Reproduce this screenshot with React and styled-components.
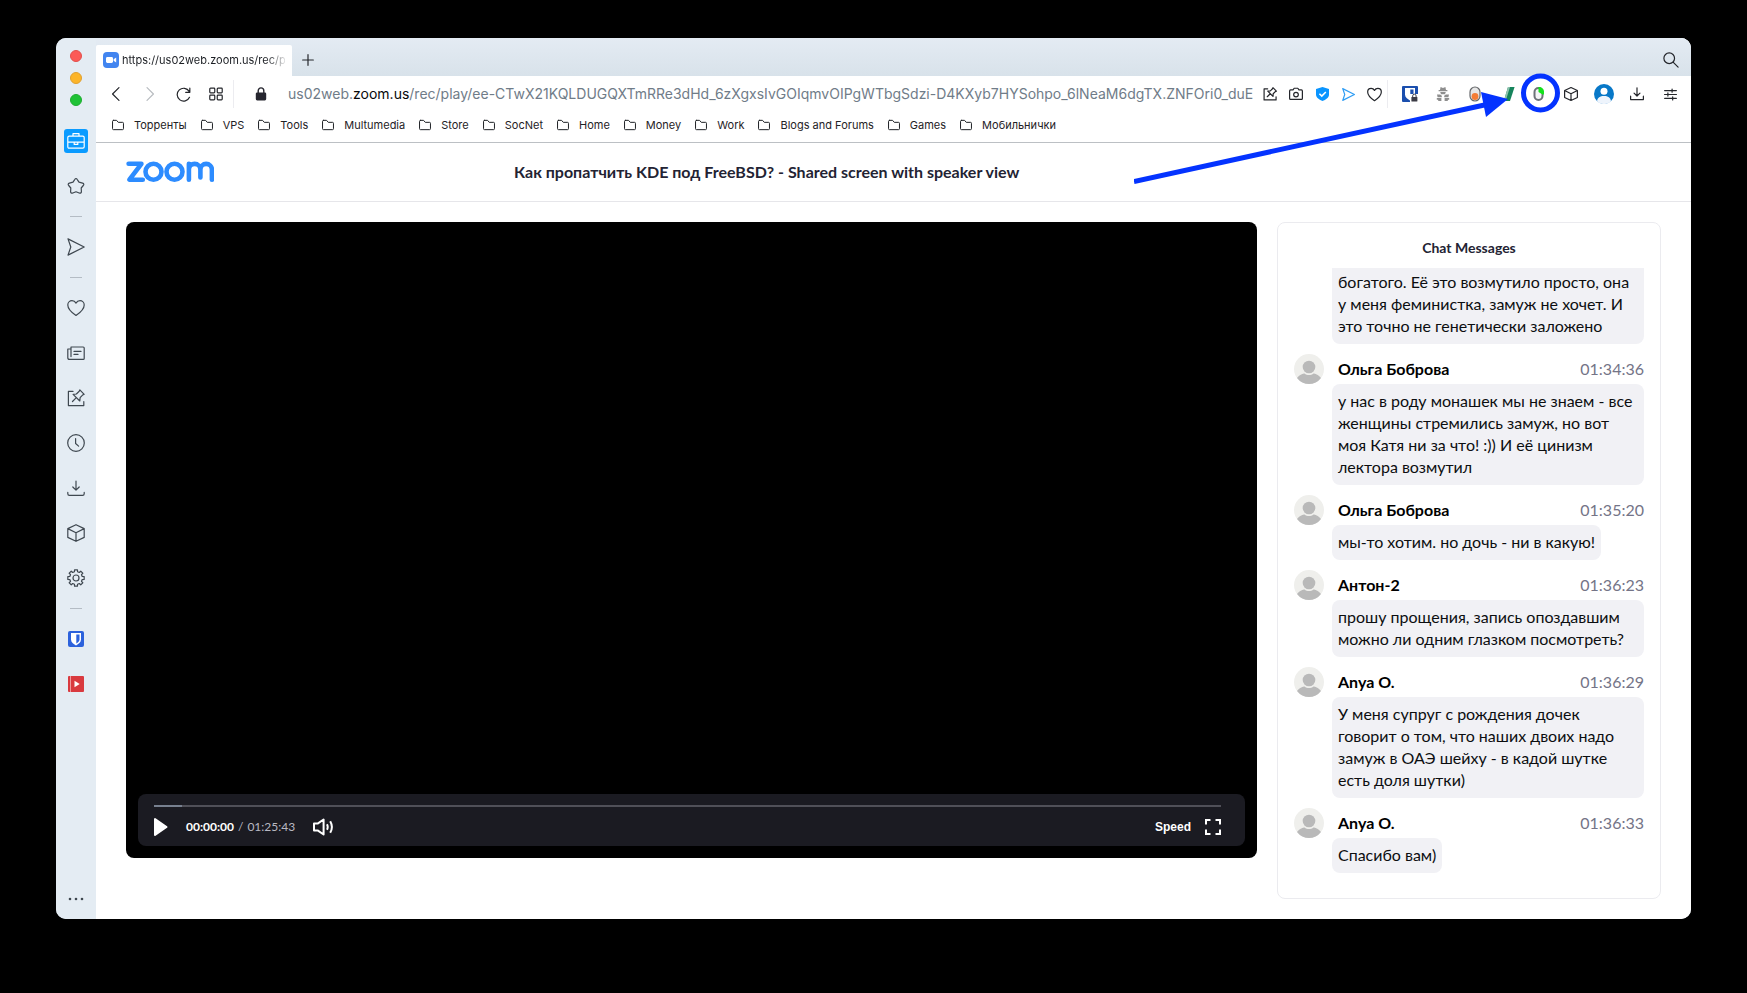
import React from "react";
import styled, { createGlobalStyle } from "styled-components";

const GlobalStyle = createGlobalStyle`
  *, *::before, *::after { box-sizing: border-box; }
  html, body { margin: 0; background: #000; }
  body { font-family: Inter, "Liberation Sans", sans-serif; color: #1c1f24; }
  button, input { font: inherit; color: inherit; }
  h1, h2, p, ol, ul { margin: 0; padding: 0; list-style: none; }
`;

/* ---------- icons ---------- */

const Svg = styled.svg`
  display: block;
  flex: none;
  fill: none;
  stroke: currentColor;
  stroke-linecap: round;
  stroke-linejoin: round;
`;

function Line({ d, size = 18, weight = 1.2, children }) {
  return (
    <Svg width={size} height={size} viewBox="0 0 18 18" strokeWidth={(weight * 18) / size} aria-hidden="true">
      {d && <path d={d} />}
      {children}
    </Svg>
  );
}

const shapes = {
  star: "M7.7 2.6Q9 .4 10.3 2.6L12 5.2l3.6.9Q17.6 6.8 16.3 8.5L14.2 11l.2 3.6Q14.2 16.7 12.2 16L9 14.8 5.8 16Q3.8 16.7 3.6 14.6L3.8 11 1.7 8.5Q.4 6.8 2.4 6.1L6 5.2Z",
  send: "M1 .9 17.2 9 1 17.1 3.8 9Z",
  heart: "M9 16.5C5 13.8.8 10.2.8 6 .8 3.4 2.8 1.700 5 1.700c1.800 0 3.200 1 4 2.400.8-1.400 2.200-2.400 4-2.400 2.200 0 4.200 1.700 4.200 4.300 0 4.200-4.200 7.800-8.200 10.500Z",
  news: "M4 3h12.2q1 0 1 1v10.4q0 1-1 1H2.4Q.8 15.4.8 13.8V5H4M4 3v9.6M7 7.4h7M7 10.4h4",
  note: "M6 2.4H1.4v14.2h15.4v-4M12.8.9l4.4 4.4-1.4.6-2.7 2.8-.3 3.3-6.7-6.7 3.3-.3 2.8-2.7ZM9.3 8.7l-3.8 3.8",
  clock: "M8.6 4.6v4.9l3 2.6",
  download: "M.8 13.4v1.4q0 1.6 1.6 1.6h13.2q1.6 0 1.6-1.6v-1.4M9 2v9M5.8 8 9 11.2 12.2 8",
  cube: "M9 .7l8.2 3.9v8.8L9 17.3.8 13.4V4.6ZM.8 4.6 9 8.7l8.2-4.1M9 8.7v8.6",
  camera: "M2 3.8h3.2l1.4-2.2h4.8l1.4 2.2H16q1.2 0 1.2 1.2v9.8q0 1.2-1.2 1.2H2q-1.2 0-1.2-1.2V5q0-1.2 1.2-1.2Z",
  folder: "M2.2 2h4.6l2.6 3h6.4q1.4 0 1.4 1.4v8.2q0 1.4-1.4 1.4H2.2Q.8 16 .8 14.6V3.4Q.8 2 2.2 2Z",
  back: "M12.8.8 4.6 9l8.2 8.2",
  forward: "M5.2.8 13.4 9l-8.2 8.2",
  reload: "M16.2 12.3A7.7 7.7 0 1 1 15.8 5.3M16.6 1.4v5h-5",
  plus: "M9 1v16M1 9h16",
  trayDown: "M.8 11.8v4.4h16.4v-4.4M9 1v10.4M5.2 7.8 9 11.6l3.8-3.8",
  sliders: "M.8 3.6h16.4M.8 9h16.4M.8 14.4h16.4M11.2 1.4v4.4M5.4 6.8v4.4M12 12.2v4.4",
};

const gearPath = (() => {
  const points = [];
  const at = (deg, r) => {
    const a = (deg * Math.PI) / 180;
    return `${(9 + r * Math.cos(a)).toFixed(2)} ${(9 + r * Math.sin(a)).toFixed(2)}`;
  };
  for (let i = 0; i < 8; i += 1) {
    const base = i * 45 - 90;
    points.push(at(base - 14, 6.4), at(base - 10, 8.3), at(base + 10, 8.3), at(base + 14, 6.4));
  }
  return `M${points.join("L")}Z`;
})();

function ZoomLogo() {
  return (
    <svg width="88" height="22" viewBox="0 0 88 22" role="img" aria-label="zoom" fill="none" stroke="#2d8cff" strokeWidth="4.6" strokeLinejoin="round" strokeLinecap="round">
      <path d="M2.6 2.8H15.4L3.400 18.700H16.800" />
      <circle cx="27.500" cy="10.800" r="8" />
      <circle cx="48.500" cy="10.800" r="8" />
      <path d="M62.900 18.800V2.800M62.900 8.600a5.750 5.750 0 0 1 11.500 0v7.800M74.400 8.600a5.750 5.750 0 0 1 11.500 0v10.200" />
    </svg>
  );
}

function CameraBadge() {
  return (
    <svg width="16" height="16" viewBox="0 0 16 16" aria-hidden="true">
      <rect width="16" height="16" rx="4" fill="#4285f0" />
      <rect x="3" y="5" width="7" height="6" rx="1.4" fill="#fff" />
      <path d="M10.6 7.3 13.2 5.4v5.2l-2.6-1.9Z" fill="#fff" />
    </svg>
  );
}

function Shield({ size = 16, locked }) {
  return (
    <svg width={size} height={size} viewBox="0 0 16 16" aria-hidden="true">
      <rect width="16" height="16" rx={locked ? 1 : 2} fill={locked ? "#1b4fae" : "#2c62dc"} />
      <path d="M3 2h10v6.5c0 2.8-2.5 4.700-5 5.900-2.500-1.200-5-3.100-5-5.900Z" fill="#fff" />
      <path d="M8.300 3.500h3.200v5c0 1.700-1.500 3-3.200 4Z" fill={locked ? "#1b4fae" : "#2c62dc"} />
      {locked && (
        <g>
          <rect x="8" y="8" width="8" height="8" fill="#fff" />
          <rect x="9.400" y="11" width="6" height="4.500" rx=".6" fill="#3b3b45" />
          <path d="M10.700 11V9.900a1.700 1.700 0 0 1 3.400 0V11" fill="none" stroke="#3b3b45" />
        </g>
      )}
    </svg>
  );
}

function RedPlayer() {
  return (
    <svg width="16" height="16" viewBox="0 0 16 16" aria-hidden="true">
      <rect width="16" height="16" rx="1" fill="#d93a3f" />
      <path d="M2.500 0v16" stroke="#ee9a9c" />
      <path d="M6.500 4.800 11.700 8l-5.200 3.200Z" fill="#fff" />
    </svg>
  );
}

function Spy() {
  return (
    <svg width="14" height="14" viewBox="0 0 14 14" fill="#8e8e8e" aria-hidden="true">
      <path d="M4.600 0 7 1 9.400 0l.6 3h1.400v1.200H2.600V3H4Z" />
      <path d="M4.200 5h5.600L9 7.200H5Z" />
      <path d="M1 7.400h3.200l1.600 1.400v1.400H1.600ZM13 7.400H9.800L8.200 8.800v1.400h4.200ZM.8 11h4.600v3H2.200v-1.200H.8ZM13.200 11H8.600v3h3.200v-1.200h1.400Z" />
    </svg>
  );
}

function Capsule() {
  return (
    <svg width="12" height="16" viewBox="0 0 12 16" aria-hidden="true">
      <rect x="1" y="1" width="10" height="14" rx="5" fill="#e6e6e6" stroke="#65676a" strokeWidth="1.200" />
      <circle cx="6" cy="10.500" r="3.400" fill="#f47c35" />
    </svg>
  );
}

function Slash() {
  return (
    <svg width="12" height="14" viewBox="0 0 12 14" aria-hidden="true">
      <path d="M5 0h6.600L7 14H.8Z" fill="#16845c" />
      <path d="M5 0h2L2.600 14H.8Z" fill="#8fc2ae" />
    </svg>
  );
}

function HalfRing() {
  return (
    <svg width="12" height="14" viewBox="0 0 12 14" aria-hidden="true">
      <rect x="1.500" y="1" width="8" height="12" rx="4" fill="#f4f4f6" stroke="#6d7278" strokeWidth="2" />
      <path d="M5.500 0C9 0 11 2 11 5v2.500H9.600L5.500 5Z" fill="#14e21c" />
    </svg>
  );
}

function Profile() {
  return (
    <svg width="20" height="20" viewBox="0 0 20 20" aria-hidden="true">
      <circle cx="10" cy="10" r="10" fill="#0878c8" />
      <circle cx="10" cy="7.300" r="3.500" fill="#fff" />
      <path d="M3 17.200C3.500 13.500 6 12 10 12s6.500 1.500 7 5.200A10 10 0 0 1 3 17.200Z" fill="#eef4fc" />
    </svg>
  );
}

function CheckShield() {
  return (
    <svg width="13" height="14" viewBox="0 0 13 14" aria-hidden="true">
      <path d="M6.500 0 13 2v5.500c0 3.300-3.500 5.300-6.500 6.500C3.500 12.800 0 10.800 0 7.500V2Z" fill="#0a95ff" />
      <path d="m3.400 6.700 2.400 2.400L9.800 5" fill="none" stroke="#fff" strokeWidth="1.600" />
    </svg>
  );
}

function Lock() {
  return (
    <svg width="12" height="14" viewBox="0 0 12 14" aria-hidden="true">
      <rect x=".8" y="5.400" width="10.400" height="8" rx="1.400" fill="#26262f" />
      <path d="M3.200 6V3.700a2.800 2.800 0 0 1 5.600 0V6" fill="none" stroke="#26262f" strokeWidth="1.400" />
    </svg>
  );
}

/* ---------- window frame ---------- */

const Desktop = styled.div`
  min-height: 100vh;
  padding: 38px 56px 74px;
  background: #000;
`;

const Window = styled.div`
  position: relative;
  display: flex;
  min-height: calc(100vh - 112px);
  border-radius: 10px;
  overflow: hidden;
  background: #e4ecf4;
`;

const Sidebar = styled.nav`
  display: flex;
  flex-direction: column;
  align-items: center;
  flex: none;
  width: 40px;
  padding: 12px 0 8px;
  background: #e4ecf3;
  color: #3f4850;
`;

const Lights = styled.div`
  display: flex;
  flex-direction: column;
  gap: 10px;
  margin-bottom: 12px;
`;

const Light = styled.button`
  width: 12px;
  height: 12px;
  padding: 0;
  border: 1px solid ${(p) => p.$edge};
  border-radius: 50%;
  background: ${(p) => p.$fill};
`;

const SideButton = styled.button`
  display: grid;
  place-items: center;
  width: 40px;
  height: 45px;
  padding: 0;
  border: 0;
  background: none;
`;

const ActiveTile = styled.span`
  display: grid;
  place-items: center;
  width: 24px;
  height: 24px;
  border-radius: 3px;
  background: #0a9bff;
  color: #fff;
`;

const SideRule = styled.hr`
  width: 12px;
  height: 1px;
  margin: 8px 0 7px;
  border: 0;
  background: #b4bcc4;
`;

const MoreButton = styled(SideButton)`
  height: 24px;
  margin-top: auto;
`;

const Main = styled.div`
  display: flex;
  flex-direction: column;
  flex: 1;
  min-width: 0;
  background: #fff;
`;

const TabBar = styled.div`
  display: flex;
  align-items: flex-end;
  height: 38px;
  padding-right: 12px;
  background: linear-gradient(#e4ebf3, #d8e2ea);
`;

const Tab = styled.button`
  display: flex;
  align-items: center;
  gap: 3px;
  width: 196px;
  height: 31px;
  padding: 0 7px 2px;
  border: 0;
  border-radius: 2px 2px 0 0;
  background: #fff;
  font-size: 11px;
`;

const TabTitle = styled.span`
  flex: 1;
  overflow: hidden;
  white-space: nowrap;
  text-align: left;
  mask-image: linear-gradient(90deg, #000 88%, #0002);
`;

const BareButton = styled.button`
  display: grid;
  place-items: center;
  flex: none;
  width: ${(p) => p.$w || 26}px;
  height: ${(p) => p.$h || 30}px;
  padding: 0;
  border: 0;
  background: none;
  color: ${(p) => p.$tone || "#24262b"};
`;

const SearchButton = styled(BareButton)`
  margin-left: auto;
`;

const Toolbar = styled.div`
  display: flex;
  align-items: center;
  height: 36px;
  padding: 0 3px;
`;

const Divider = styled.span`
  flex: none;
  width: 1px;
  height: 28px;
  background: #ececf0;
`;

const Address = styled.div`
  flex: 1;
  min-width: 0;
  overflow: hidden;
  white-space: nowrap;
  font-size: 14px;
  line-height: 24px;
  color: #707c88;
`;

const Domain = styled.span`
  color: #08090b;
`;

const Bookmarks = styled.nav`
  display: flex;
  gap: 14px;
  height: 31px;
  padding: 4px 16px 0;
  border-bottom: 1px solid #bcc0c4;
`;

const Bookmark = styled.a`
  display: flex;
  align-items: center;
  gap: 10px;
  height: 18px;
  color: #1f2226;
  font-size: 11px;
  line-height: 18px;
  white-space: nowrap;
  text-decoration: none;
`;

/* ---------- recording page ---------- */

const PageHeader = styled.header`
  display: flex;
  align-items: center;
  height: 59px;
  padding: 0 30px;
  border-bottom: 1px solid #e6e6ea;
`;

const Title = styled.h1`
  margin-left: 300px;
  color: #232333;
  font: 700 16px/24px Lato, sans-serif;
  white-space: nowrap;
`;

const Content = styled.main`
  display: flex;
  align-items: flex-start;
  flex: 1;
  gap: 20px;
  padding: 20px 30px;
`;

const Player = styled.section`
  display: flex;
  align-items: flex-end;
  flex: 1;
  min-width: 0;
  aspect-ratio: 16 / 9;
  padding: 12px;
  border-radius: 8px;
  background: #000;
`;

const Controls = styled.div`
  flex: 1;
  height: 52px;
  padding: 11px 24px 0 16px;
  border-radius: 8px;
  background: #1b1b22;
  color: #fff;
`;

const Seek = styled.input`
  appearance: none;
  display: block;
  width: 100%;
  height: 2px;
  margin: 0;
  background: linear-gradient(90deg, #77808f 28px, #505058 28px);
  &::-webkit-slider-thumb { appearance: none; width: 0; height: 0; }
`;

const ControlRow = styled.div`
  display: flex;
  align-items: center;
  height: 40px;
`;

const Control = styled.button`
  display: flex;
  padding: 0;
  border: 0;
  background: none;
  font: 700 12px/16px "Liberation Sans", sans-serif;
`;

const Clock = styled.div`
  display: flex;
  gap: 4px;
  margin: 0 18px;
  color: #b9b9c2;
  font: 400 12px/16px Lato, sans-serif;
`;

const Elapsed = styled.span`
  color: #fff;
  font-weight: 700;
`;

const RightControls = styled.div`
  display: flex;
  align-items: center;
  gap: 14px;
  margin-left: auto;
`;

const Chat = styled.aside`
  display: flex;
  flex-direction: column;
  align-self: stretch;
  flex: none;
  width: 384px;
  padding: 0 16px 25px;
  border: 1px solid #ebebef;
  border-radius: 8px;
  font-family: Lato, sans-serif;
`;

const ChatTitle = styled.h2`
  height: 45px;
  padding-top: 5px;
  color: #232333;
  font-size: 14px;
  font-weight: 700;
  line-height: 40px;
  text-align: center;
`;

const Messages = styled.ol`
  display: flex;
  flex-direction: column;
  gap: 10px;
`;

const Message = styled.li`
  display: grid;
  grid-template-columns: 30px 1fr;
  column-gap: 8px;
`;

const Meta = styled.div`
  display: flex;
  align-items: center;
  justify-content: space-between;
  height: 30px;
  padding: 0 0 2px 6px;
  color: #000;
  font-size: 16px;
`;

const Time = styled.time`
  color: #747487;
`;

const Bubble = styled.p`
  grid-column: 2;
  justify-self: start;
  padding: ${(p) => (p.$cut ? 3 : 6)}px 6px 7px;
  width: ${(p) => (p.$cut ? "100%" : "auto")};
  border-radius: ${(p) => (p.$cut ? "0 0 8px 8px" : "8px")};
  background: #f1f1f5;
  color: #0c0e10;
  font-size: 16px;
  line-height: 22px;
`;

function Avatar() {
  return (
    <svg width="30" height="30" viewBox="0 0 30 30" aria-hidden="true">
      <circle cx="15" cy="15" r="15" fill="#efefec" />
      <circle cx="15" cy="13" r="6.300" fill="#b9b9b9" />
      <path d="M3 24C6 20.500 9 19.600 10.500 19.600c2.500 2 6.500 2 9 0 1.500 0 4.500.9 7.500 4.400A15 15 0 0 1 3 24Z" fill="#b9b9b9" />
    </svg>
  );
}

const Annotation = styled.svg`
  position: absolute;
  top: 30px;
  right: 125px;
  pointer-events: none;
`;

const bookmarks = [
  "Торренты", "VPS", "Tools", "Multumedia", "Store", "SocNet", "Home",
  "Money", "Work", "Blogs and Forums", "Games", "Мобильнички",
];

const messages = [
  { text: "богатого. Её это возмутило просто, она у меня феминистка, замуж не хочет. И это точно не генетически заложено" },
  { name: "Ольга Боброва", time: "01:34:36", text: "у нас в роду монашек мы не знаем - все женщины стремились замуж, но вот моя Катя ни за что! :)) И её цинизм лектора возмутил" },
  { name: "Ольга Боброва", time: "01:35:20", text: "мы-то хотим. но дочь - ни в какую!" },
  { name: "Антон-2", time: "01:36:23", text: "прошу прощения, запись опоздавшим можно ли одним глазком посмотреть?" },
  { name: "Anya O.", time: "01:36:29", text: "У меня супруг с рождения дочек говорит о том, что наших двоих надо замуж в ОАЭ шейху - в кадой шутке есть доля шутки)" },
  { name: "Anya O.", time: "01:36:33", text: "Спасибо вам)" },
];

const extensions = [
  { label: "Bitwarden", icon: <Shield locked />, w: 44 },
  { label: "Privacy", icon: <Spy />, w: 22 },
  { label: "Capsule", icon: <Capsule />, w: 42 },
  { label: "Notes", icon: <Slash />, w: 26 },
  { label: "Recorder", icon: <HalfRing />, w: 34 },
  { label: "Packages", icon: <Line d={shapes.cube} size={14} />, w: 30 },
  { label: "Profile", icon: <Profile />, w: 36 },
  { label: "Downloads", icon: <Line d={shapes.trayDown} size={14} />, w: 30 },
  { label: "Settings", icon: <Line d={shapes.sliders} size={13} />, w: 36 },
];

function Panels() {
  const item = (label, d, children) => (
    <SideButton aria-label={label}>
      <Line d={d}>{children}</Line>
    </SideButton>
  );
  return (
    <Sidebar>
      <Lights>
        <Light aria-label="Close" $fill="#fc5b57" $edge="#e2504c" />
        <Light aria-label="Minimise" $fill="#fcb52a" $edge="#e0a030" />
        <Light aria-label="Maximise" $fill="#1fc236" $edge="#1eae30" />
      </Lights>
      <SideButton aria-label="Workspace">
        <ActiveTile>
          <Line d="M2.200 4.200h13.600q1.400 0 1.400 1.400v9.200q0 1.400-1.400 1.400H2.200Q.8 16.200.8 14.800V5.600Q.8 4.200 2.200 4.200ZM6 4V1.600h6V4M.8 10.200h16.400M7.200 10.200v2.200h3.600v-2.200" />
        </ActiveTile>
      </SideButton>
      {item("Bookmarks", shapes.star)}
      <SideRule />
      {item("Mail", shapes.send)}
      <SideRule />
      {item("Favourites", shapes.heart)}
      {item("Reading list", shapes.news)}
      {item("Notes", shapes.note)}
      {item("History", shapes.clock, <circle cx="9" cy="9" r="8.300" />)}
      {item("Downloads", shapes.download)}
      {item("Extensions", shapes.cube)}
      {item("Settings", gearPath, <circle cx="9" cy="9" r="3" />)}
      <SideRule />
      <SideButton aria-label="Bitwarden"><Shield /></SideButton>
      <SideButton aria-label="Video"><RedPlayer /></SideButton>
      <MoreButton aria-label="More">
        <svg width="16" height="4" viewBox="0 0 16 4" fill="currentColor" aria-hidden="true">
          <circle cx="2" cy="2" r="1.300" /><circle cx="8" cy="2" r="1.300" /><circle cx="14" cy="2" r="1.300" />
        </svg>
      </MoreButton>
    </Sidebar>
  );
}

function BrowserBars() {
  return (
    <>
      <TabBar>
        <Tab><CameraBadge /><TabTitle>https://us02web.zoom.us/rec/pl</TabTitle></Tab>
        <BareButton aria-label="New tab" $w={32} $h={32}><Line d={shapes.plus} size={12} /></BareButton>
        <SearchButton aria-label="Search tabs" $w={16} $h={32}>
          <Line size={16} d="M11.600 11.600 17 17"><circle cx="7" cy="7" r="6" /></Line>
        </SearchButton>
      </TabBar>
      <Toolbar>
        <BareButton aria-label="Back" $w={34}><Line d={shapes.back} size={14} /></BareButton>
        <BareButton aria-label="Forward" $w={34} $tone="#b8bcc0"><Line d={shapes.forward} size={14} /></BareButton>
        <BareButton aria-label="Reload" $w={32}><Line d={shapes.reload} size={15} /></BareButton>
        <BareButton aria-label="Start page" $w={34}>
          <Line size={14}>
            <rect x="1" y="1.500" width="6.400" height="6" rx="1" /><rect x="10.600" y="1.500" width="6.400" height="6" rx="1" />
            <rect x="1" y="10.500" width="6.400" height="6" rx="1" /><rect x="10.600" y="10.500" width="6.400" height="6" rx="1" />
          </Line>
        </BareButton>
        <Divider />
        <BareButton aria-label="Site information" $w={54}><Lock /></BareButton>
        <Address role="textbox" aria-label="Address">
          us02web.<Domain>zoom.us</Domain>/rec/play/ee-CTwX21KQLDUGQXTmRRe3dHd_6zXgxsIvGOIqmvOIPgWTbgSdzi-D4KXyb7HYSohpo_6lNeaM6dgTX.ZNFOri0_duE
        </Address>
        <BareButton aria-label="Add note"><Line d={shapes.note} size={14} /></BareButton>
        <BareButton aria-label="Capture page"><Line d={shapes.camera} size={14}><circle cx="9" cy="9.800" r="3" /></Line></BareButton>
        <BareButton aria-label="Content blocker"><CheckShield /></BareButton>
        <BareButton aria-label="Send" $tone="#2f9df4"><Line d={shapes.send} size={13} /></BareButton>
        <BareButton aria-label="Bookmark page"><Line d={shapes.heart} size={15} /></BareButton>
        <Divider />
        {extensions.map((e) => (
          <BareButton key={e.label} aria-label={e.label} $w={e.w}>{e.icon}</BareButton>
        ))}
      </Toolbar>
      <Bookmarks aria-label="Bookmarks">
        {bookmarks.map((b) => (
          <Bookmark href="#" key={b}><Line d={shapes.folder} size={12} weight={1} />{b}</Bookmark>
        ))}
      </Bookmarks>
    </>
  );
}

function VideoPlayer() {
  return (
    <Player aria-label="Recording">
      <Controls>
        <Seek type="range" min="0" max="5143" defaultValue="0" aria-label="Seek" />
        <ControlRow>
          <Control aria-label="Play">
            <svg width="14" height="20" viewBox="0 0 14 20" aria-hidden="true">
              <path d="M1 2v16L12.500 10Z" fill="#fff" stroke="#fff" strokeWidth="2" strokeLinejoin="round" />
            </svg>
          </Control>
          <Clock><Elapsed>00:00:00</Elapsed><span>/</span><span>01:25:43</span></Clock>
          <Control aria-label="Volume">
            <svg width="20" height="18" viewBox="0 0 20 18" fill="none" stroke="#fff" strokeWidth="2" strokeLinejoin="round" aria-hidden="true">
              <path d="M1 5.600h3.600L10.600 1.500v15L4.600 12.400H1Z" />
              <path d="M14 6.200q1.400 2.800 0 5.600M17.200 3.200q3.400 5.800 0 11.600" />
            </svg>
          </Control>
          <RightControls>
            <Control>Speed</Control>
            <Control aria-label="Full screen">
              <svg width="16" height="16" viewBox="0 0 16 16" fill="none" stroke="#fff" strokeWidth="2" aria-hidden="true">
                <path d="M1 5.500V1h4.500M10.500 1H15v4.500M15 10.500V15h-4.500M5.500 15H1v-4.500" />
              </svg>
            </Control>
          </RightControls>
        </ControlRow>
      </Controls>
    </Player>
  );
}

export default function App() {
  return (
    <>
      <GlobalStyle />
      <Desktop>
        <Window>
          <Panels />
          <Main>
            <BrowserBars />
            <PageHeader>
              <ZoomLogo />
              <Title>Как пропатчить KDE под FreeBSD? - Shared screen with speaker view</Title>
            </PageHeader>
            <Content>
              <VideoPlayer />
              <Chat>
                <ChatTitle>Chat Messages</ChatTitle>
                <Messages>
                  {messages.map((m, i) => (
                    <Message key={i}>
                      {m.name && <Avatar />}
                      {m.name && <Meta><b>{m.name}</b><Time>{m.time}</Time></Meta>}
                      <Bubble $cut={!m.name}>{m.text}</Bubble>
                    </Message>
                  ))}
                </Messages>
              </Chat>
            </Content>
          </Main>
          <Annotation width="432" height="124" viewBox="0 0 432 124" aria-hidden="true">
            <path d="M0 113.500 355 36" stroke="#0433ff" strokeWidth="5" />
            <path d="M347 24 374 31 352 49Z" fill="#0433ff" />
            <circle cx="406.500" cy="25" r="17" fill="none" stroke="#0433ff" strokeWidth="5" />
          </Annotation>
        </Window>
      </Desktop>
    </>
  );
}
